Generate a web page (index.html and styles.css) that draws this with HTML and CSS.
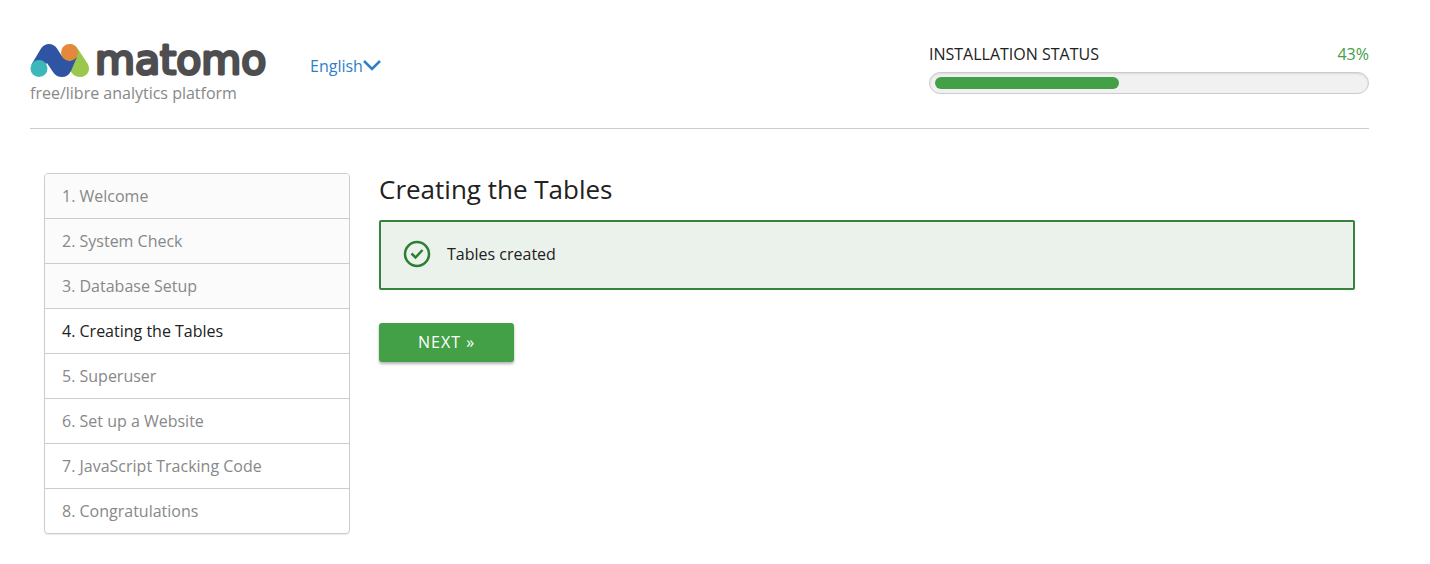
FILE: index.html
```html
<!DOCTYPE html>
<html lang="en">
<head>
    <meta charset="UTF-8">
    <meta name="viewport" content="width=device-width, initial-scale=1.0">
    <title>Matomo › Installation</title>
    <link rel="stylesheet" href="styles.css">
</head>
<body>
    <header class="header">
        <div class="brand">
            <svg class="logo" viewBox="0 0 244 36" role="img" aria-label="matomo">
                <path d="M39.500 1 Q45 1 48 6 L57.500 20.500 C61.500 27 57 34 50.500 34 C44 34 41 30 40 26 L33 14 Z" fill="#99c84d"/>
                <path d="M1.500 21.500 L11 5.500 Q14 1 19 1 Q24 1 27 5.500 L31.500 12.500 L39.500 18 L47 14 L41 28 Q38 34 32 34 Q26 34 23 29 L17 20 L9 28 Z" fill="#2f54a2"/>
                <circle cx="9" cy="25.500" r="8.500" fill="#3cb8ba"/>
                <circle cx="39.500" cy="9.500" r="8.500" fill="#e4883b"/>
                <text class="wordmark" x="65" y="31">matomo</text>
            </svg>
            <p class="tagline">free/libre analytics platform</p>
        </div>
        <a class="language" href="#">English<svg class="chevron" viewBox="0 0 18 12"><path d="M1 1 L9 9 L17 1"/></svg></a>
        <div class="status">
            <div class="status-label">
                <span>INSTALLATION STATUS</span>
                <span class="percent">43%</span>
            </div>
            <div class="progress" role="progressbar" aria-valuenow="43" aria-valuemin="0" aria-valuemax="100" aria-label="Installation status">
                <div class="progress-bar" style="width: 43%"></div>
            </div>
        </div>
    </header>

    <div class="container">
        <ul class="steps">
            <li class="past">1. Welcome</li>
            <li class="past">2. System Check</li>
            <li class="past">3. Database Setup</li>
            <li class="current">4. Creating the Tables</li>
            <li>5. Superuser</li>
            <li>6. Set up a Website</li>
            <li>7. JavaScript Tracking Code</li>
            <li>8. Congratulations</li>
        </ul>

        <main class="content">
            <h2>Creating the Tables</h2>
            <div class="alert">
                <svg class="check" viewBox="0 0 28 28">
                    <circle cx="14" cy="14" r="12"/>
                    <path d="M8.500 13.500 L12.500 17.500 L19.500 10"/>
                </svg>
                <span>Tables created</span>
            </div>
            <button class="btn" type="button">NEXT »</button>
        </main>
    </div>
</body>
</html>
```
FILE: styles.css
```css
* {
    margin: 0;
    padding: 0;
    box-sizing: border-box;
}

body {
    padding: 0 61px 24px 30px;
    background: #fff;
    color: #212121;
    font-family: 'Segoe UI', 'Open Sans', sans-serif;
    font-size: 16px;
    line-height: 20px;
}

.header {
    display: flex;
    align-items: flex-start;
    padding: 43px 0 25px;
    border-bottom: 1px solid #ccc;
}

.brand {
    width: 244px;
}

.logo {
    display: block;
    width: 100%;
    height: 36px;
    overflow: visible;
}

.wordmark {
    font-family: 'DejaVu Sans', sans-serif;
    font-size: 41px;
    fill: #4e4e50;
    stroke: #4e4e50;
    stroke-width: 3;
    stroke-linejoin: round;
}

.tagline {
    padding-top: 4px;
    color: #888;
}

.language {
    display: flex;
    align-items: center;
    margin: 13px 0 0 36px;
    color: #2f80c8;
    text-decoration: none;
}

.chevron {
    width: 18px;
    height: 12px;
    fill: none;
    stroke: currentColor;
    stroke-width: 2.5;
}

.status {
    width: 440px;
    margin-left: auto;
}

.status-label {
    display: flex;
    justify-content: space-between;
    padding: 1px 0 8px;
}

.percent {
    color: #43a047;
}

.progress {
    padding: 4px 5px;
    height: 22px;
    border: 1px solid #ccc;
    border-radius: 11px;
    background: #f1f1f1;
    box-shadow: inset 0 1px 2px rgba(0, 0, 0, 0.1);
}

.progress-bar {
    height: 12px;
    border-radius: 6px;
    background: #43a047;
}

.container {
    display: flex;
    align-items: flex-start;
    gap: 29px;
    padding: 44px 14px 0;
}

.steps {
    flex: 0 0 306px;
    list-style: none;
    border: 1px solid #ccc;
    border-radius: 4px;
    overflow: hidden;
    box-shadow: 0 1px 1px rgba(0, 0, 0, 0.08);
}

.steps li {
    padding: 12px 17px;
    color: #888;
}

.steps li + li {
    border-top: 1px solid #ccc;
}

.steps .past {
    background: #fbfbfb;
}

.steps .current {
    color: #212121;
}

.content {
    flex: 1;
}

h2 {
    margin-bottom: 15px;
    font-size: 26px;
    font-weight: 400;
    line-height: 32px;
}

.alert {
    display: flex;
    align-items: center;
    gap: 16px;
    margin-bottom: 33px;
    padding: 18px 22px 20px;
    border: 2px solid #37833b;
    border-radius: 2px;
    background: #ebf2eb;
}

.check {
    width: 28px;
    height: 28px;
    fill: none;
    stroke: #2e7d32;
    stroke-width: 2.5;
}

.btn {
    padding: 0 39px;
    border: none;
    border-radius: 3px;
    background: #43a047;
    box-shadow: 0 2px 3px rgba(0, 0, 0, 0.3);
    color: #fff;
    font: inherit;
    line-height: 39px;
    letter-spacing: 1px;
    cursor: pointer;
}

.btn:hover {
    background: #388e3c;
}
```
